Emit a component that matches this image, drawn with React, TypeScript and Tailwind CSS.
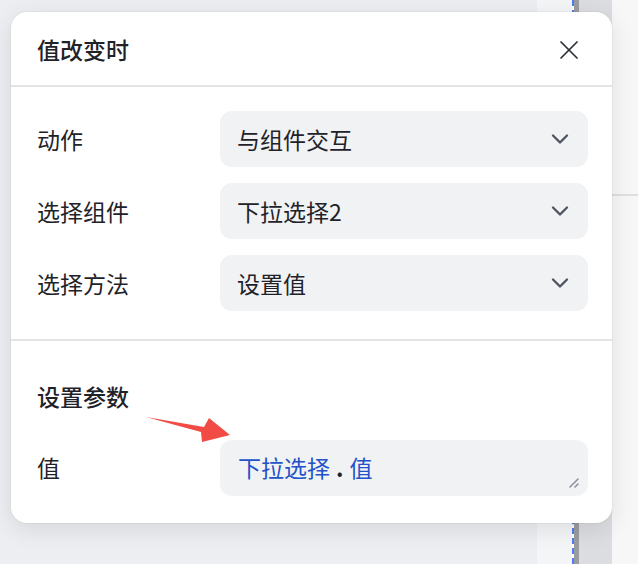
import { X, ChevronDown } from 'lucide-react';

const font = { fontFamily: '"Noto Sans CJK SC", "Noto Sans", sans-serif' };

function SelectBox({ value }: { value: string }) {
  return (
    <div className="flex h-14 w-[368px] items-center justify-between rounded-xl bg-[#f1f2f4] pl-[17px] pr-[14px]">
      <span className="text-[23px] text-[#1f2329]">{value}</span>
      <ChevronDown className="h-7 w-7 text-[#4e5560]" strokeWidth={2} />
    </div>
  );
}

function Row({ label, value }: { label: string; value: string }) {
  return (
    <div className="flex items-center justify-between">
      <span className="text-[23px] text-[#1f2329]">{label}</span>
      <SelectBox value={value} />
    </div>
  );
}

export default function App() {
  return (
    <div className="relative flex h-[564px] w-[638px] overflow-hidden" style={font}>
      {/* page behind the popover */}
      <div className="w-[537px] bg-[#eceef1]" />
      <div className="w-[35px] bg-[#f4f5f7]" />
      <div className="w-[2px] border-l-2 border-dashed border-[#4f7cf7]" />
      <div className="w-[5px] bg-[#9c9c9f]" />
      <div className="w-[33px] bg-[#dcdde1]" />
      <div className="flex flex-1 flex-col bg-[#f7f7f8]">
        <div className="h-[196px] border-b-2 border-[#dedfe2]" />
      </div>

      {/* popover */}
      <div className="absolute left-[11px] top-[12px] flex w-[601px] flex-col rounded-2xl bg-white shadow-[0_6px_24px_rgba(0,0,0,0.10),0_0_0_1px_rgba(0,0,0,0.03)]">
        <div className="flex h-[75px] items-center justify-between border-b-2 border-[#e3e4e6] pl-[26px] pr-[27px] pt-[2px]">
          <span className="text-[23px] font-medium text-[#1f2329]">值改变时</span>
          <X className="h-8 w-8 text-[#2b2f36]" strokeWidth={1.3} />
        </div>

        <div className="flex flex-col gap-4 border-b-2 border-[#e3e4e6] pb-7 pl-[26px] pr-6 pt-6">
          <Row label="动作" value="与组件交互" />
          <Row label="选择组件" value="下拉选择2" />
          <Row label="选择方法" value="设置值" />
        </div>

        <div className="flex flex-col pb-[27px] pl-[26px] pr-6 pt-[38px]">
          <span className="text-[23px] font-medium text-[#1f2329]">设置参数</span>
          <div className="mt-[26px] flex items-center justify-between">
            <span className="text-[23px] text-[#1f2329]">值</span>
            <div className="relative flex h-14 w-[368px] items-center rounded-xl bg-[#f1f2f4] pl-[18px]">
              <span className="flex items-center text-[23px] text-[#2152c9]">
                下拉选择
                <span className="mx-[6px] font-bold text-[#1f2329]">.</span>
                值
              </span>
              <svg className="absolute bottom-[8px] right-[8px]" width="12" height="12" viewBox="0 0 12 12">
                <path d="M2 11 L10 3 M7 11 L10 8" stroke="#8a8f98" strokeWidth="1.5" strokeLinecap="round" />
              </svg>
            </div>
          </div>
        </div>
      </div>

      {/* annotation arrow */}
      <svg className="absolute left-0 top-0" width="638" height="564" viewBox="0 0 638 564">
        <polygon points="146,417 204,427 209,418 230,435 202,442 201,432" fill="#f24b46" />
      </svg>
    </div>
  );
}
